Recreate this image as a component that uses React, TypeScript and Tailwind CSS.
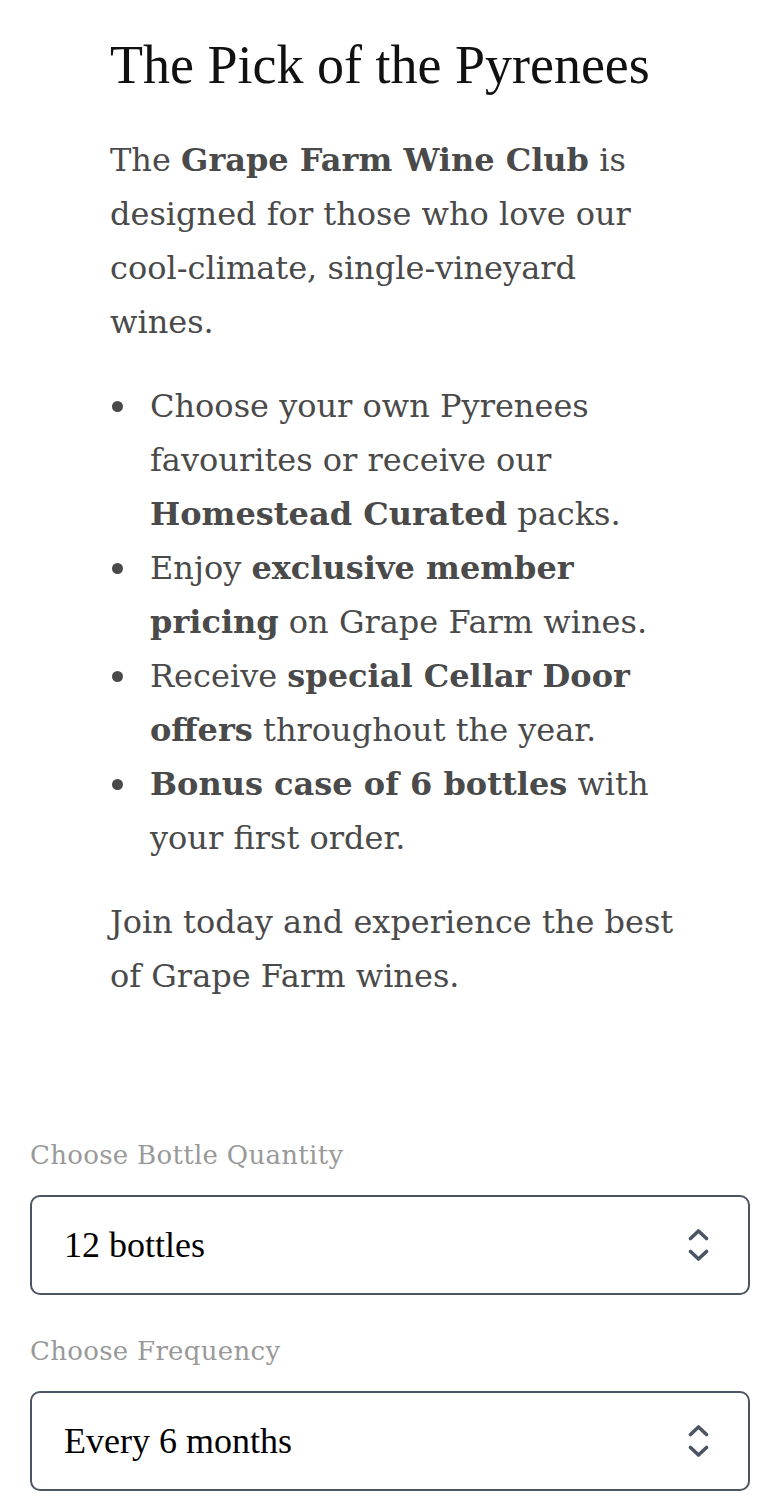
const bodyFont = { fontFamily: '"DejaVu Serif", serif' };

function UpDownIcon() {
  return (
    <svg
      viewBox="0 0 21 33"
      className="pointer-events-none absolute right-[41px] top-1/2 -translate-y-1/2 h-[33px] w-[21px] text-[#4b5563]"
      fill="none"
      stroke="currentColor"
      strokeWidth={3.6}
      strokeLinecap="round"
      strokeLinejoin="round"
    >
      <polyline points="2.5,10 10.5,2.5 18.5,10" />
      <polyline points="2.5,23 10.5,30.5 18.5,23" />
    </svg>
  );
}

function SelectField({ label, options, value }: { label: string; options: string[]; value: string }) {
  return (
    <div>
      <label className="block text-[26px] leading-[32px] text-[#999999] tracking-[0.3px] mb-[24px]">{label}</label>
      <div className="relative">
        <select
          defaultValue={value}
          className="w-full h-[100px] appearance-none rounded-[10px] border-2 border-[#4b5563] bg-white pl-[32px] pr-[80px] text-[36px] text-black [font-family:'Liberation_Serif',serif]"
        >
          {options.map((o) => (
            <option key={o}>{o}</option>
          ))}
        </select>
        <UpDownIcon />
      </div>
    </div>
  );
}

function Bullet({ children }: { children: React.ReactNode }) {
  return (
    <li className="flex">
      <span className="w-[40px] h-[54px] shrink-0 flex items-center">
        <span className="ml-[2px] h-[11px] w-[11px] rounded-full bg-[#4a4a4a]" />
      </span>
      <span>{children}</span>
    </li>
  );
}

export default function App() {
  return (
    <div className="min-h-[1500px] bg-white" style={bodyFont}>
      {/* intro */}
      <div className="pl-[110px] pr-[100px] pt-[37px] text-[#4a4a4a] text-[32px] leading-[54px]">
        <h1 className="text-[54px] leading-[56px] text-[#111111] mb-[40px] [font-family:'Liberation_Serif',serif]">
          The Pick of the Pyrenees
        </h1>
        <p>
          The <strong>Grape Farm Wine Club</strong> is designed for those who love our cool-climate, single-vineyard wines.
        </p>
        <ul className="my-[30px]">
          <Bullet>
            Choose your own Pyrenees favourites or receive our <strong>Homestead Curated</strong> packs.
          </Bullet>
          <Bullet>
            Enjoy <strong>exclusive member pricing</strong> on Grape Farm wines.
          </Bullet>
          <Bullet>
            Receive <strong>special Cellar Door offers</strong> throughout the year.
          </Bullet>
          <Bullet>
            <strong>Bonus case of 6 bottles</strong> with your first order.
          </Bullet>
        </ul>
        <p>Join today and experience the best of Grape Farm wines.</p>
      </div>

      {/* form */}
      <div className="px-[30px] mt-[136px] flex flex-col gap-[40px]">
        <SelectField label="Choose Bottle Quantity" options={['6 bottles', '12 bottles', '24 bottles']} value="12 bottles" />
        <SelectField label="Choose Frequency" options={['Every 3 months', 'Every 6 months', 'Every 12 months']} value="Every 6 months" />
      </div>
    </div>
  );
}
